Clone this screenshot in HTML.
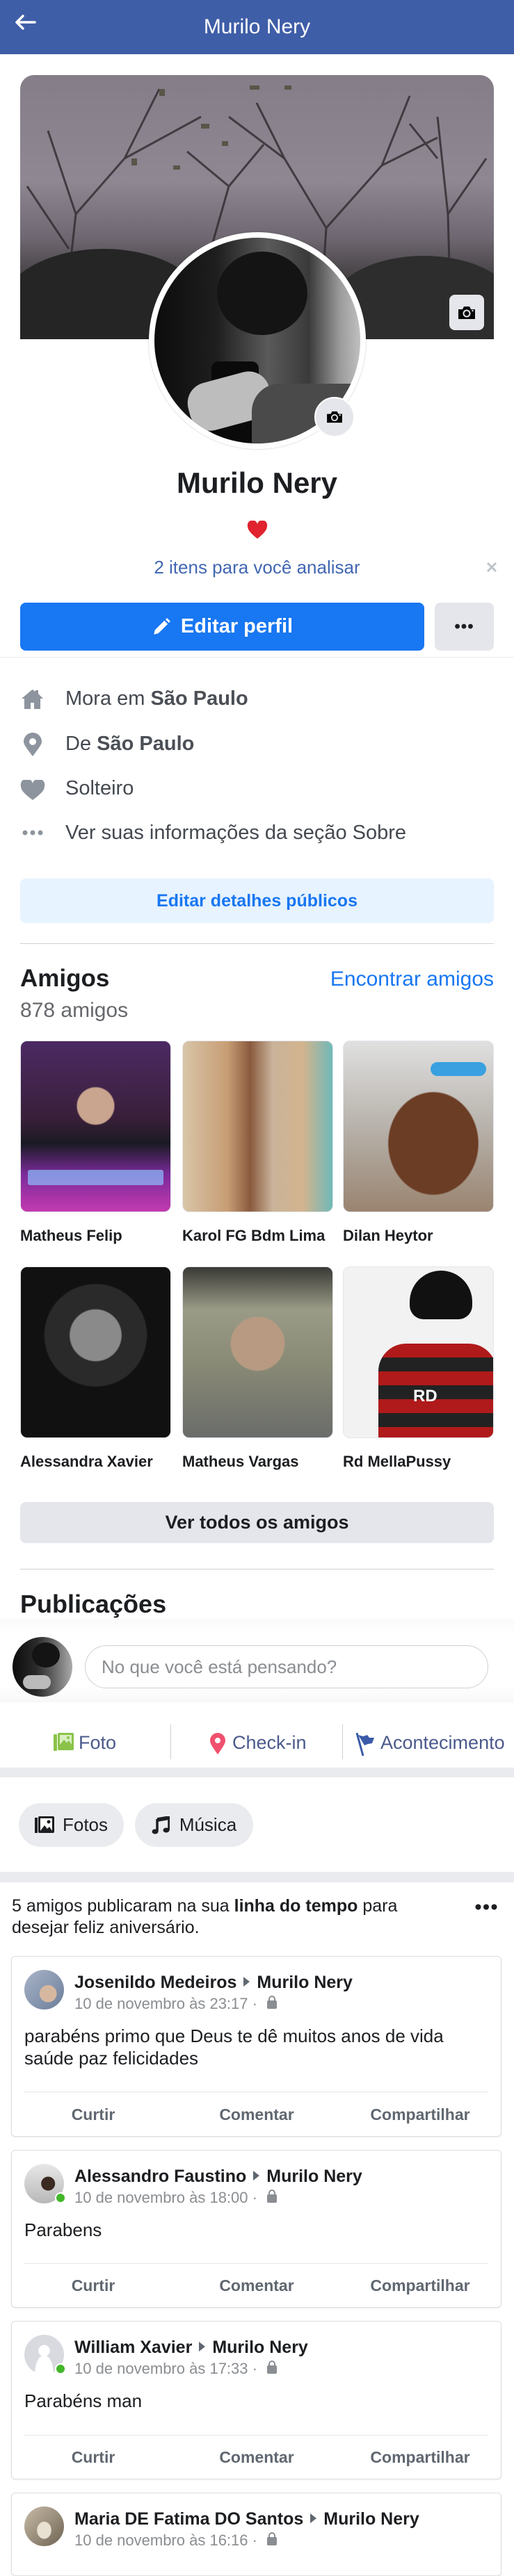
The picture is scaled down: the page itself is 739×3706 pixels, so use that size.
<!DOCTYPE html>
<html><head><meta charset="utf-8"><style>
*{margin:0;padding:0;box-sizing:border-box}
body{width:739px;height:3675px;position:relative;background:#fff;font-family:"Liberation Sans",Arial,sans-serif;color:#1c1e21;overflow:hidden}
.a{position:absolute}
.c{display:flex;align-items:center;justify-content:center}
.ph{position:absolute;border-radius:10px;overflow:hidden;border:1px solid #e4e6eb;width:217px;height:247px}
.fn{position:absolute;font-weight:bold;font-size:22px;color:#1c1e21;white-space:nowrap}
.card{position:absolute;left:16px;width:705px;border:1px solid #dddfe2;border-radius:6px;background:#fff;box-shadow:0 1px 2px rgba(0,0,0,.08)}
.card .av{position:absolute;left:18px;top:19px;width:57px;height:57px;border-radius:50%}
.card .nm{position:absolute;left:90px;top:23px;font-weight:bold;font-size:25px;white-space:nowrap}
.card .dt{position:absolute;left:90px;top:55px;font-size:22px;color:#8a8d91;white-space:nowrap}
.card .bd{position:absolute;left:18px;top:98px;font-size:26px;line-height:32px;color:#1c1e21;white-space:nowrap}
.card .sep{position:absolute;left:18px;right:18px;height:1px;background:#e4e6eb}
.card .ac{position:absolute;font-weight:bold;font-size:23px;color:#606770;transform:translateX(-50%)}
.tri{display:inline-block;width:0;height:0;border-left:9px solid #606770;border-top:7px solid transparent;border-bottom:7px solid transparent;margin:0 10px 2px 10px}
.lock{display:inline-block;width:14px;height:12px;background:#8a8d91;border-radius:2px;position:relative;margin-left:8px}
.lock:before{content:"";position:absolute;left:2px;top:-7px;width:10px;height:9px;border:2px solid #8a8d91;border-radius:5px 5px 0 0;border-bottom:none;box-sizing:border-box}
.dot{position:absolute;width:16px;height:16px;border-radius:50%;background:#42b72a;border:2px solid #fff}
.it{position:absolute;left:94px;font-size:29px;color:#444950;white-space:nowrap}
</style></head><body>
<!-- header -->
<div class="a" style="left:0;top:0;width:739px;height:78px;background:#3f5ea8"></div>
<svg class="a" style="left:20px;top:20px" width="32" height="24" viewBox="0 0 32 24"><path d="M30 12H4M13 3L4 12l9 9" stroke="#fff" stroke-width="3.5" fill="none" stroke-linecap="round" stroke-linejoin="round"/></svg>
<div class="a" style="left:0;width:739px;top:22px;text-align:center;color:#fff;font-size:30px">Murilo Nery</div>

<!-- cover -->
<div class="a" style="left:29px;top:108px;width:681px;height:380px;border-radius:20px 20px 0 0;overflow:hidden;background:linear-gradient(180deg,#857d88 0%,#8f8792 40%,#6e6670 62%,#3a3838 80%,#2a2a2a 100%)">
<svg width="681" height="380" viewBox="0 0 681 380" style="position:absolute;left:0;top:0">
<g stroke="#2e2a2e" stroke-width="3" fill="none" opacity=".8">
<path d="M60 380L80 200L40 80M80 200L150 120L200 20M150 120L260 60M70 250L10 160"/>
<path d="M430 380L440 220L380 120L340 40M440 220L520 130L560 30M520 130L600 90M380 120L300 60"/>
<path d="M620 380L615 200L600 60M615 200L670 120M600 120L560 70"/>
<path d="M260 300L300 160L350 100M300 160L240 110"/>
</g>
<ellipse cx="120" cy="340" rx="150" ry="90" fill="#252525"/>
<ellipse cx="330" cy="320" rx="100" ry="60" fill="#2b2b2b"/>
<ellipse cx="580" cy="330" rx="130" ry="70" fill="#2d2d2d"/>
<g fill="#5a5548"><rect x="200" y="20" width="8" height="10"/><rect x="330" y="15" width="14" height="6"/><rect x="380" y="15" width="10" height="6"/><rect x="260" y="70" width="12" height="7"/><rect x="220" y="130" width="10" height="6"/><rect x="160" y="120" width="8" height="10"/><rect x="290" y="95" width="9" height="7"/></g>
</svg>
</div>
<div class="a c" style="left:646px;top:424px;width:50px;height:51px;border-radius:8px;background:#e4e6eb">
<svg width="28" height="22" viewBox="0 0 28 22"><path d="M2 6h6l2-4h8l2 4h6v14H2z" fill="#050505"/><circle cx="14" cy="12" r="5.5" fill="#e4e6eb"/><circle cx="14" cy="12" r="3.5" fill="#050505"/><circle cx="22.5" cy="8" r="1.2" fill="#e4e6eb"/></svg></div>

<!-- profile pic -->
<div class="a" style="left:214px;top:334px;width:312px;height:312px;border-radius:50%;background:#fff;box-shadow:0 0 2px rgba(0,0,0,.25)"></div>
<div class="a" style="left:222px;top:342px;width:296px;height:296px;border-radius:50%;overflow:hidden;background:linear-gradient(90deg,#0c0c0c 0%,#1e1e1e 30%,#5a5a5a 55%,#3a3a3a 75%,#9a9a9a 90%,#c0c0c0 100%)">
<div class="a" style="left:90px;top:20px;width:130px;height:120px;border-radius:50%;background:#141414"></div>
<div class="a" style="left:82px;top:178px;width:68px;height:140px;border-radius:10px;background:#0a0a0a"></div>
<div class="a" style="left:48px;top:200px;width:120px;height:70px;border-radius:30px;background:#bdbdbd;transform:rotate(-15deg)"></div>
<div class="a" style="left:140px;top:210px;width:170px;height:120px;background:#4a4a4a;border-radius:40px 0 0 0"></div>
</div>
<div class="a c" style="left:452px;top:571px;width:58px;height:58px;border-radius:50%;background:#e4e6eb;border:2px solid #fff">
<svg width="26" height="20" viewBox="0 0 28 22"><path d="M2 6h6l2-4h8l2 4h6v14H2z" fill="#050505"/><circle cx="14" cy="12" r="5.5" fill="#e4e6eb"/><circle cx="14" cy="12" r="3.5" fill="#050505"/><circle cx="22.5" cy="8" r="1.2" fill="#e4e6eb"/></svg></div>

<div class="a" style="left:0;width:739px;top:671px;text-align:center;font-size:42px;font-weight:bold;color:#1c1e21">Murilo Nery</div>
<svg class="a" style="left:355px;top:749px" width="30" height="27" viewBox="0 0 30 27"><path d="M15 26C5 18 1 13 1 8A7 7 0 0 1 15 5A7 7 0 0 1 29 8C29 13 25 18 15 26z" fill="#e0232e"/></svg>
<div class="a" style="left:0;width:739px;top:801px;text-align:center;font-size:26px;color:#4267b2">2 itens para você analisar</div>
<svg class="a" style="left:699px;top:808px" width="16" height="16" viewBox="0 0 16 16"><path d="M2 2l12 12M14 2L2 14" stroke="#bec3c9" stroke-width="3"/></svg>

<div class="a c" style="left:29px;top:867px;width:581px;height:69px;border-radius:8px;background:#1877f2;color:#fff;font-size:29px;font-weight:bold">
<svg width="28" height="28" viewBox="0 0 26 26" style="margin-right:14px"><path d="M3 23l1.5-6L17 4.5l4.5 4.5L9 21.5z" fill="#fff"/><path d="M18.5 3l2-2 4.5 4.5-2 2z" fill="#fff"/></svg>Editar perfil</div>
<div class="a c" style="left:625px;top:867px;width:85px;height:69px;border-radius:8px;background:#e4e6eb;font-size:24px;font-weight:bold;letter-spacing:1px">•••</div>
<div class="a" style="left:0;top:945px;width:739px;height:1px;background:#ececec"></div>

<!-- intro -->
<svg class="a" style="left:29px;top:990px" width="35" height="32" viewBox="0 0 35 32"><path d="M17.5 2L2 15h4v15h9v-9h5v9h9V15h4L26 8V3h-4v2z" fill="#8d949e"/></svg>
<div class="it" style="top:989px">Mora em <b style="color:#4b4f56">São Paulo</b></div>
<svg class="a" style="left:33px;top:1054px" width="28" height="35" viewBox="0 0 28 35"><path d="M14 34C5 22 1 17 1 13a13 13 0 0 1 26 0c0 4-4 9-13 21z" fill="#8d949e"/><circle cx="14" cy="13" r="5" fill="#fff"/></svg>
<div class="it" style="top:1054px">De <b style="color:#4b4f56">São Paulo</b></div>
<svg class="a" style="left:29px;top:1122px" width="36" height="30" viewBox="0 0 36 30"><path d="M18 29C6 20 1 15 1 9A8 8 0 0 1 18 5A8 8 0 0 1 35 9C35 15 30 20 18 29z" fill="#8d949e"/></svg>
<div class="it" style="top:1118px">Solteiro</div>
<svg class="a" style="left:32px;top:1194px" width="30" height="8" viewBox="0 0 30 8"><circle cx="4" cy="4" r="3.5" fill="#8d949e"/><circle cx="15" cy="4" r="3.5" fill="#8d949e"/><circle cx="26" cy="4" r="3.5" fill="#8d949e"/></svg>
<div class="it" style="top:1182px">Ver suas informações da seção Sobre</div>

<div class="a c" style="left:29px;top:1264px;width:681px;height:64px;border-radius:8px;background:#e7f3ff;color:#1877f2;font-weight:bold;font-size:25px">Editar detalhes públicos</div>
<div class="a" style="left:29px;top:1357px;width:681px;height:1px;background:#ced0d4"></div>

<!-- friends -->
<div class="a" style="left:29px;top:1388px;font-size:35px;font-weight:bold">Amigos</div>
<div class="a" style="right:29px;top:1392px;font-size:30px;color:#1877f2">Encontrar amigos</div>
<div class="a" style="left:29px;top:1437px;font-size:30px;color:#65676b">878 amigos</div>

<div class="ph" style="left:29px;top:1497px;background:radial-gradient(circle at 50% 38%,#c9a48e 0 14%,transparent 15%),linear-gradient(180deg,#4b2a63 0%,#3a1f3a 45%,#1a1a22 60%,#7a2a9a 78%,#c33ab0 100%)"><div class="a" style="left:10px;top:185px;width:195px;height:22px;background:#8fc0ff;opacity:.7;border-radius:3px"></div></div>
<div class="ph" style="left:262px;top:1497px;background:linear-gradient(90deg,#d8c5a8 0%,#c79d74 30%,#8a5a3e 45%,#c9b39a 60%,#d3b48e 80%,#70b8b8 100%)"></div>
<div class="ph" style="left:493px;top:1497px;background:radial-gradient(ellipse at 60% 60%,#6b3d24 0 35%,transparent 36%),linear-gradient(180deg,#e0e0e0 0%,#b7b2ab 50%,#9a8470 100%)"><div class="a" style="left:125px;top:30px;width:80px;height:20px;border-radius:10px;background:#3aa0e0"></div></div>
<div class="fn" style="left:29px;top:1765px">Matheus Felip</div>
<div class="fn" style="left:262px;top:1765px">Karol FG Bdm Lima</div>
<div class="fn" style="left:493px;top:1765px">Dilan Heytor</div>

<div class="ph" style="left:29px;top:1822px;background:radial-gradient(circle at 50% 40%,#8a8a8a 0 20%,#2a2a2a 21% 40%,#111 41%)"></div>
<div class="ph" style="left:262px;top:1822px;background:radial-gradient(circle at 50% 45%,#b89a82 0 22%,transparent 23%),linear-gradient(180deg,#3a3a36 0%,#9a9b86 25%,#8a8b76 55%,#6a6c6a 100%)"></div>
<div class="ph" style="left:493px;top:1822px;background:#f2f2f2"><div class="a" style="left:50px;top:110px;width:170px;height:140px;border-radius:40px 40px 0 0;background:repeating-linear-gradient(180deg,#b01a1a 0 20px,#222 20px 40px)"></div><div class="a" style="left:95px;top:5px;width:90px;height:70px;border-radius:45px 45px 20px 20px;background:#111"></div><div class="a" style="left:100px;top:172px;color:#fff;font-weight:bold;font-size:24px">RD</div></div>
<div class="fn" style="left:29px;top:2090px">Alessandra Xavier</div>
<div class="fn" style="left:262px;top:2090px">Matheus Vargas</div>
<div class="fn" style="left:493px;top:2090px">Rd MellaPussy</div>

<div class="a c" style="left:29px;top:2161px;width:681px;height:59px;border-radius:8px;background:#e4e6eb;font-weight:bold;font-size:27px">Ver todos os amigos</div>
<div class="a" style="left:29px;top:2257px;width:681px;height:1px;background:#ced0d4"></div>
<div class="a" style="left:29px;top:2287px;font-size:36px;font-weight:bold">Publicações</div>

<!-- composer -->
<div class="a" style="left:0;top:2329px;width:739px;height:120px;background:linear-gradient(180deg,#fafafa,#fff 20%,#fff 80%,#f8f8f8)"></div>
<div class="a" style="left:18px;top:2355px;width:86px;height:86px;border-radius:50%;overflow:hidden;background:linear-gradient(90deg,#0c0c0c 0%,#2a2a2a 40%,#666 70%,#aaa 100%)"><div class="a" style="left:28px;top:8px;width:40px;height:36px;border-radius:50%;background:#141414"></div><div class="a" style="left:15px;top:55px;width:40px;height:20px;border-radius:10px;background:#bbb"></div></div>
<div class="a" style="left:122px;top:2367px;width:580px;height:62px;border-radius:31px;border:1px solid #ccd0d5;font-size:26px;color:#8a8d91;padding:15px 0 0 23px">No que você está pensando?</div>

<div class="a" style="left:245px;top:2481px;width:1px;height:50px;background:#ccd0d5"></div>
<div class="a" style="left:492px;top:2481px;width:1px;height:50px;background:#ccd0d5"></div>
<svg class="a" style="left:77px;top:2493px" width="29" height="27" viewBox="0 0 29 27"><rect x="0" y="2" width="5" height="24" rx="1" fill="#8bc34a"/><rect x="6" y="0" width="23" height="25" rx="2" fill="#8bc34a"/><rect x="9" y="3" width="17" height="14" fill="#d9efc0"/><path d="M9 17l6-7 4 4 3-3 4 6z" fill="#8bc34a"/><circle cx="21" cy="7" r="2" fill="#8bc34a"/></svg>
<div class="a" style="left:113px;top:2492px;font-size:27px;color:#4b5a8c">Foto</div>
<svg class="a" style="left:301px;top:2493px" width="24" height="32" viewBox="0 0 24 32"><path d="M12 31C4 20 1 15 1 11a11 11 0 0 1 22 0c0 4-3 9-11 20z" fill="#f0506e"/><circle cx="12" cy="11" r="4" fill="#fff"/></svg>
<div class="a" style="left:334px;top:2492px;font-size:27px;color:#4b5a8c">Check-in</div>
<svg class="a" style="left:511px;top:2493px" width="28" height="34" viewBox="0 0 28 34"><path d="M2 0l9 33" stroke="#3b5aa8" stroke-width="3"/><path d="M4 3l7 2 6-2 3 4 7 0-3 8 -6 1 -5 2z" fill="#3b5aa8"/></svg>
<div class="a" style="left:547px;top:2492px;font-size:27px;color:#4b5a8c;white-space:nowrap">Acontecimento</div>
<div class="a" style="left:0;top:2543px;width:739px;height:14px;background:#e9ebee"></div>

<!-- chips -->
<div class="a c" style="left:27px;top:2594px;width:151px;height:63px;border-radius:32px;background:#e9ebee;font-size:26px;color:#1c1e21">
<svg width="28" height="25" viewBox="0 0 28 25" style="margin-right:12px"><rect x="0" y="2" width="4" height="22" fill="#1c1e21"/><rect x="5" y="0" width="23" height="24" rx="2" fill="#1c1e21"/><rect x="8" y="3" width="17" height="18" fill="#fff"/><path d="M8 21l6-8 4 5 3-3 4 6z" fill="#1c1e21"/><circle cx="20" cy="8" r="2.5" fill="#1c1e21"/></svg>Fotos</div>
<div class="a c" style="left:194px;top:2594px;width:170px;height:63px;border-radius:32px;background:#e9ebee;font-size:26px;color:#1c1e21">
<svg width="26" height="26" viewBox="0 0 26 26" style="margin-right:14px"><path d="M8 4l17-3v19" stroke="#1c1e21" stroke-width="3.5" fill="none"/><path d="M8 4v18" stroke="#1c1e21" stroke-width="3.5"/><ellipse cx="5" cy="22" rx="4.5" ry="3.5" fill="#1c1e21"/><ellipse cx="21" cy="20" rx="4.5" ry="3.5" fill="#1c1e21"/><path d="M8 4l17-3v4L8 8z" fill="#1c1e21"/></svg>Música</div>
<div class="a" style="left:0;top:2693px;width:739px;height:15px;background:#e9ebee"></div>

<div class="a" style="left:17px;top:2727px;font-size:25px;line-height:31px;color:#1c1e21;white-space:nowrap">5 amigos publicaram na sua <b>linha do tempo</b> para<br>desejar feliz aniversário.</div>
<svg class="a" style="left:683px;top:2739px" width="32" height="9" viewBox="0 0 32 9"><circle cx="4.5" cy="4.5" r="4" fill="#1c1e21"/><circle cx="16" cy="4.5" r="4" fill="#1c1e21"/><circle cx="27.5" cy="4.5" r="4" fill="#1c1e21"/></svg>

<!-- cards -->
<div class="card" style="top:2814px;height:260px">
<div class="av" style="background:radial-gradient(circle at 60% 60%,#d6b8a0 0 25%,transparent 26%),linear-gradient(135deg,#a8b4c8,#6d7e9a)"></div>
<div class="nm">Josenildo Medeiros<span class="tri"></span>Murilo Nery</div>
<div class="dt">10 de novembro às 23:17 · <span class="lock"></span></div>
<div class="bd">parabéns primo que Deus te dê muitos anos de vida<br>saúde paz felicidades</div>
<div class="sep" style="top:194px"></div>
<div class="ac" style="left:117px;top:214px">Curtir</div>
<div class="ac" style="left:352px;top:214px">Comentar</div>
<div class="ac" style="left:587px;top:214px">Compartilhar</div>
</div>

<div class="card" style="top:3093px;height:227px">
<div class="av" style="background:radial-gradient(circle at 60% 50%,#3a2a22 0 22%,transparent 23%),linear-gradient(180deg,#e8e8e8,#b8b8b8)"></div>
<div class="dot" style="left:62px;top:60px"></div>
<div class="nm">Alessandro Faustino<span class="tri"></span>Murilo Nery</div>
<div class="dt">10 de novembro às 18:00 · <span class="lock"></span></div>
<div class="bd">Parabens</div>
<div class="sep" style="top:162px"></div>
<div class="ac" style="left:117px;top:181px">Curtir</div>
<div class="ac" style="left:352px;top:181px">Comentar</div>
<div class="ac" style="left:587px;top:181px">Compartilhar</div>
</div>

<div class="card" style="top:3339px;height:228px">
<div class="av" style="background:radial-gradient(circle at 50% 40%,#fff 0 18%,transparent 19%),radial-gradient(ellipse at 50% 95%,#fff 0 32%,transparent 33%),#d8dadf"></div>
<div class="dot" style="left:62px;top:60px"></div>
<div class="nm">William Xavier<span class="tri"></span>Murilo Nery</div>
<div class="dt">10 de novembro às 17:33 · <span class="lock"></span></div>
<div class="bd">Parabéns man</div>
<div class="sep" style="top:163px"></div>
<div class="ac" style="left:117px;top:182px">Curtir</div>
<div class="ac" style="left:352px;top:182px">Comentar</div>
<div class="ac" style="left:587px;top:182px">Compartilhar</div>
</div>

<div class="card" style="top:3586px;height:120px">
<div class="av" style="background:radial-gradient(ellipse at 50% 60%,#e8e0d0 0 25%,transparent 26%),linear-gradient(135deg,#c8bca8,#6e6252)"></div>
<div class="nm">Maria DE Fatima DO Santos<span class="tri"></span>Murilo Nery</div>
<div class="dt">10 de novembro às 16:16 · <span class="lock"></span></div>
</div>
</body></html>
